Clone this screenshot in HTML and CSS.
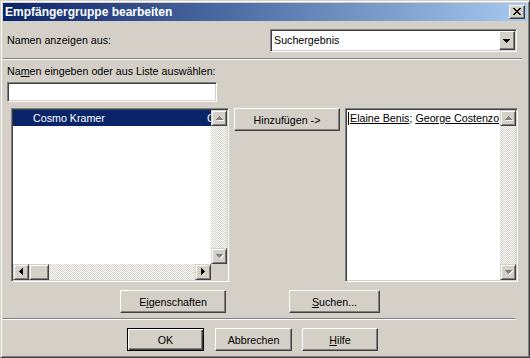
FILE: index.html
```html
<!DOCTYPE html>
<html lang="de">
<head>
    <meta charset="UTF-8">
    <title>Empfängergruppe bearbeiten</title>
    <link rel="stylesheet" href="styles.css">
</head>
<body>
    <div class="window">
        <div class="titlebar">
            <span class="title">Empfängergruppe bearbeiten</span>
            <span class="close-btn">
                <svg width="14" height="12" viewBox="0 0 14 12" shape-rendering="crispEdges">
                    <path transform="translate(3,2)" fill="#000" d="M0 0h2v1h-2z M6 0h2v1h-2z M1 1h2v1h-2z M5 1h2v1h-2z M2 2h4v1h-4z M3 3h2v1h-2z M2 4h4v1h-4z M1 5h2v1h-2z M5 5h2v1h-2z M0 6h2v1h-2z M6 6h2v1h-2z"/>
                </svg>
            </span>
        </div>

        <div class="dialog">
            <div class="source-row">
                <span class="label">Namen anzei<u>g</u>en aus:</span>
                <div class="combo">
                    <span class="combo-text">Suchergebnis</span>
                    <span class="combo-btn">
                        <svg width="14" height="17" viewBox="0 0 14 17" shape-rendering="crispEdges">
                            <path fill="#000" d="M3 7h7v1h-7z M4 8h5v1h-5z M5 9h3v1h-3z M6 10h1v1h-1z"/>
                        </svg>
                    </span>
                </div>
            </div>

            <div class="sep sep-top"></div>

            <span class="label label-search">Na<u>m</u>en eingeben oder aus Liste auswählen:</span>
            <div class="textfield"></div>

            <div class="lists">
                <div class="listbox listbox-left">
                    <div class="list-main">
                        <div class="list-items">
                            <div class="list-row selected">
                                <span class="col-name">Cosmo Kramer</span>
                                <span class="col-mail">C</span>
                            </div>
                        </div>
                        <div class="vscroll">
                            <span class="sb-btn">
                                <svg width="14" height="14" viewBox="0 0 14 14" shape-rendering="crispEdges">
                                    <path fill="#fff" transform="translate(1,1)" d="M7 5h1v1h-1z M6 6h3v1h-3z M5 7h5v1h-5z M4 8h7v1h-7z"/>
                                    <path fill="#808080" d="M7 5h1v1h-1z M6 6h3v1h-3z M5 7h5v1h-5z M4 8h7v1h-7z"/>
                                </svg>
                            </span>
                            <span class="sb-track"></span>
                            <span class="sb-btn">
                                <svg width="14" height="14" viewBox="0 0 14 14" shape-rendering="crispEdges">
                                    <path fill="#fff" transform="translate(1,1)" d="M4 5h7v1h-7z M5 6h5v1h-5z M6 7h3v1h-3z M7 8h1v1h-1z"/>
                                    <path fill="#808080" d="M4 5h7v1h-7z M5 6h5v1h-5z M6 7h3v1h-3z M7 8h1v1h-1z"/>
                                </svg>
                            </span>
                        </div>
                    </div>
                    <div class="hscroll-row">
                        <div class="hscroll">
                            <span class="sb-btn">
                                <svg width="14" height="14" viewBox="0 0 14 14" shape-rendering="crispEdges">
                                    <path fill="#000" d="M5 6h1v1h-1z M6 5h1v3h-1z M7 4h1v5h-1z M8 3h1v7h-1z"/>
                                </svg>
                            </span>
                            <span class="sb-thumb"></span>
                            <span class="sb-track"></span>
                            <span class="sb-btn">
                                <svg width="14" height="14" viewBox="0 0 14 14" shape-rendering="crispEdges">
                                    <path fill="#000" d="M5 3h1v7h-1z M6 4h1v5h-1z M7 5h1v3h-1z M8 6h1v1h-1z"/>
                                </svg>
                            </span>
                        </div>
                        <div class="corner"></div>
                    </div>
                </div>

                <button class="btn btn-add">Hinzufügen -&gt;</button>

                <div class="listbox listbox-right">
                    <div class="list-main">
                        <div class="members"><span class="caret"></span><u>Elaine Benis</u>; <u>George Costenzo</u></div>
                        <div class="vscroll">
                            <span class="sb-btn">
                                <svg width="14" height="14" viewBox="0 0 14 14" shape-rendering="crispEdges">
                                    <path fill="#fff" transform="translate(1,1)" d="M7 5h1v1h-1z M6 6h3v1h-3z M5 7h5v1h-5z M4 8h7v1h-7z"/>
                                    <path fill="#808080" d="M7 5h1v1h-1z M6 6h3v1h-3z M5 7h5v1h-5z M4 8h7v1h-7z"/>
                                </svg>
                            </span>
                            <span class="sb-track"></span>
                            <span class="sb-btn">
                                <svg width="14" height="14" viewBox="0 0 14 14" shape-rendering="crispEdges">
                                    <path fill="#fff" transform="translate(1,1)" d="M4 5h7v1h-7z M5 6h5v1h-5z M6 7h3v1h-3z M7 8h1v1h-1z"/>
                                    <path fill="#808080" d="M4 5h7v1h-7z M5 6h5v1h-5z M6 7h3v1h-3z M7 8h1v1h-1z"/>
                                </svg>
                            </span>
                        </div>
                    </div>
                </div>
            </div>

            <div class="action-row">
                <button class="btn btn-props">E<u>i</u>genschaften</button>
                <button class="btn btn-search"><u>S</u>uchen...</button>
            </div>

            <div class="sep sep-bottom"></div>

            <div class="footer-row">
                <button class="btn btn-default btn-ok">OK</button>
                <button class="btn btn-cancel">Abbrechen</button>
                <button class="btn btn-help"><u>H</u>ilfe</button>
            </div>
        </div>
    </div>
</body>
</html>
```

FILE: styles.css
```css
body {
    margin: 0;
    background: #d4d0c8;
    font-family: "Liberation Sans", Arial, sans-serif;
    font-size: 10.7px;
    color: #000;
}

.window {
    width: 530px;
    height: 358px;
    box-sizing: border-box;
    border: 1px solid;
    border-color: #d4d0c8 #404040 #404040 #d4d0c8;
    box-shadow: inset 1px 1px #fff, inset -1px -1px #808080;
    padding: 2px;
    background: #d4d0c8;
    display: flex;
    flex-direction: column;
}

/* title bar */
.titlebar {
    height: 18px;
    flex: none;
    display: flex;
    align-items: flex-start;
    background: linear-gradient(to right, #0a246a, #a6caf0);
    color: #fff;
}

.title {
    padding-left: 2px;
    line-height: 18px;
    font-size: 12px;
    font-weight: bold;
}

.close-btn {
    margin: 2px 2px 0 auto;
    width: 16px;
    height: 14px;
    box-sizing: border-box;
    border: 1px solid;
    border-color: #fff #404040 #404040 #fff;
    box-shadow: inset -1px -1px #808080;
    background: #d4d0c8;
    display: flex;
}

/* dialog body */
.dialog {
    flex: 1;
    display: flex;
    flex-direction: column;
}

.label {
    margin-left: 4px;
    line-height: 13px;
}

.source-row {
    margin-top: 8px;
    height: 23px;
    display: flex;
    align-items: center;
}

.combo {
    margin-left: auto;
    margin-right: 10px;
    width: 247px;
    height: 23px;
    box-sizing: border-box;
    border: 1px solid;
    border-color: #808080 #fff #fff #808080;
    padding: 1px;
    box-shadow: inset 1px 1px #404040, inset -1px -1px #d4d0c8;
    background: #fff;
    display: flex;
}

.combo-text {
    flex: 1;
    padding-left: 2px;
    line-height: 19px;
}

.combo-btn {
    width: 16px;
    box-sizing: border-box;
    border: 1px solid;
    border-color: #fff #404040 #404040 #fff;
    box-shadow: inset -1px -1px #808080;
    background: #d4d0c8;
}

.sep {
    height: 0;
    border-top: 1px solid #808080;
    border-bottom: 1px solid #fff;
}

.sep-top {
    margin-top: 6px;
    margin-right: 5px;
}

.label-search {
    margin-top: 5px;
}

.textfield {
    margin-top: 4px;
    margin-left: 4px;
    width: 210px;
    height: 20px;
    box-sizing: border-box;
    border: 1px solid;
    border-color: #808080 #fff #fff #808080;
    box-shadow: inset 1px 1px #404040, inset -1px -1px #d4d0c8;
    background: #fff;
}

/* lists */
.lists {
    margin-top: 6px;
    height: 174px;
    padding-left: 8px;
    display: flex;
    align-items: flex-start;
}

.listbox {
    height: 174px;
    box-sizing: border-box;
    border: 1px solid;
    border-color: #808080 #fff #fff #808080;
    padding: 1px;
    box-shadow: inset 1px 1px #404040, inset -1px -1px #d4d0c8;
    background: #fff;
    display: flex;
    flex-direction: column;
}

.listbox-left {
    width: 218px;
}

.listbox-right {
    width: 173px;
    margin-left: 5px;
}

.list-main {
    flex: 1;
    min-height: 0;
    display: flex;
}

.list-items {
    flex: 1;
    min-width: 0;
    overflow: hidden;
}

.list-row {
    height: 16px;
    line-height: 16px;
    display: flex;
    white-space: nowrap;
}

.list-row.selected {
    background: #0a246a;
    color: #fff;
}

.col-name {
    width: 194px;
    flex: none;
    box-sizing: border-box;
    padding-left: 20px;
}

.col-mail {
    flex: 1;
    min-width: 0;
    overflow: hidden;
}

.members {
    flex: 1;
    overflow: hidden;
    white-space: nowrap;
    padding: 1px 0 0 1px;
    line-height: 14px;
}

.caret {
    display: inline-block;
    width: 1px;
    height: 13px;
    background: #000;
    vertical-align: -3px;
    margin-right: 1px;
}

/* scrollbars */
.vscroll {
    width: 16px;
    flex: none;
    display: flex;
    flex-direction: column;
}

.sb-btn,
.sb-thumb {
    width: 16px;
    height: 16px;
    flex: none;
    box-sizing: border-box;
    border: 1px solid;
    border-color: #d4d0c8 #404040 #404040 #d4d0c8;
    box-shadow: inset 1px 1px #fff, inset -1px -1px #808080;
    background: #d4d0c8;
    display: flex;
}

.sb-thumb {
    width: 20px;
}

.sb-track {
    flex: 1;
    background: repeating-conic-gradient(#d4d0c8 0 25%, #fff 0 50%) 0 0 / 2px 2px;
}

.hscroll-row {
    height: 16px;
    flex: none;
    display: flex;
}

.hscroll {
    flex: 1;
    display: flex;
}

.corner {
    width: 16px;
    background: #d4d0c8;
}

/* buttons */
.btn {
    height: 23px;
    box-sizing: border-box;
    padding: 0;
    border: 1px solid;
    border-color: #fff #404040 #404040 #fff;
    box-shadow: inset -1px -1px #808080;
    background: #d4d0c8;
    font: inherit;
    color: #000;
    flex: none;
}

.btn-default {
    border-color: #000;
    box-shadow: inset 1px 1px #fff, inset -1px -1px #404040, inset -2px -2px #808080;
}

.btn-add {
    width: 106px;
    margin-left: 5px;
}

.action-row {
    margin-top: 8px;
    padding-left: 117px;
    display: flex;
}

.btn-props {
    width: 106px;
}

.btn-search {
    width: 91px;
    margin-left: 63px;
}

.sep-bottom {
    margin-top: 5px;
    width: 512px;
}

.footer-row {
    margin-top: 8px;
    padding-left: 124px;
    display: flex;
}

.btn-ok {
    width: 77px;
}

.btn-cancel {
    width: 77px;
    margin-left: 11px;
}

.btn-help {
    width: 76px;
    margin-left: 10px;
}
```
